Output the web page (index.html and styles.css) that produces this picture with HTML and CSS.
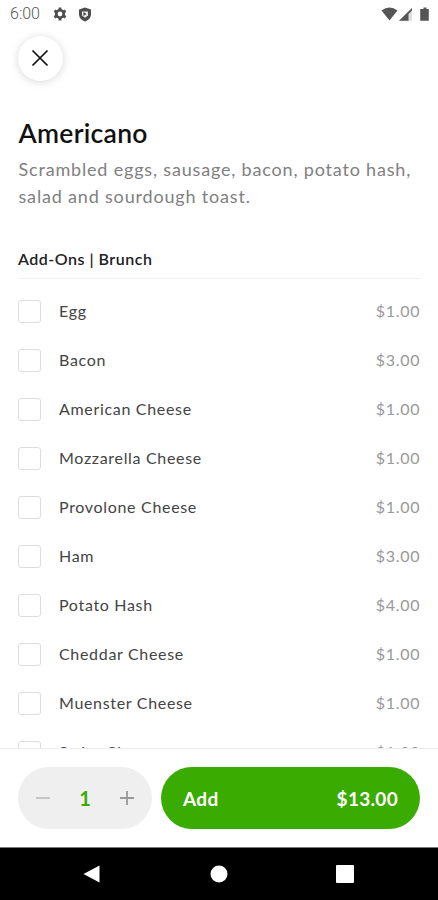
FILE: index.html
```html
<!DOCTYPE html>
<html lang="en">
<head>
<meta charset="utf-8">
<title>Americano</title>
<link rel="stylesheet" href="styles.css">
</head>
<body>
<div class="screen">
  <header class="status">
    <span class="time">6:00</span>
    <svg class="gear" width="14" height="14" viewBox="0 0 14 14"><circle cx="7" cy="7" r="3.700" fill="none" stroke="#4d4d4d" stroke-width="2.600"/><path d="M7 .5v2.6M7 10.9v2.6M1.4 3.7l2.2 1.3M10.4 9l2.2 1.3M1.4 10.3L3.600 9M10.400 5l2.200-1.300" stroke="#4d4d4d" stroke-width="2.800"/></svg>
    <svg class="shield" width="14" height="15" viewBox="0 0 14 15"><path d="M7 .4L13 2.600v4.400c0 3.600-2.500 6.300-6 7.600C3.500 13.300 1 10.600 1 7V2.600z" fill="#4d4d4d"/><path d="M4 4.500h6v4L7 10.700 4 8.500z" fill="#eee"/><path d="M5.400 5v4l3.300-2z" fill="#4d4d4d"/></svg>
    <svg class="signals" width="50" height="15" viewBox="0 0 50 15"><path d="M.5 3.400Q8.500-2.400 16.500 3.400L8.500 13.500z" fill="#555"/><path d="M31 1v12.700H18z" fill="#ddd"/><path d="M31 1v2.500L27.500 7v6.700H18z" fill="#555"/><path d="M42.500.5h3V2h2.300v11.700h-8.600V2h3.300z" fill="#555"/></svg>
  </header>
  <main class="content">
    <button class="close" aria-label="Close"><svg width="18" height="18" viewBox="0 0 18 18"><path d="M1.500 1.500l15 15M16.500 1.500l-15 15" stroke="#111" stroke-width="1.700"/></svg></button>
    <h1>Americano</h1>
    <p class="description">Scrambled eggs, sausage, bacon, potato hash,<br>salad and sourdough toast.</p>
    <h2>Add-Ons | Brunch</h2>
    <ul class="options">
      <li><i class="box"></i><span>Egg</span><b>$1.00</b></li>
      <li><i class="box"></i><span>Bacon</span><b>$3.00</b></li>
      <li><i class="box"></i><span>American Cheese</span><b>$1.00</b></li>
      <li><i class="box"></i><span>Mozzarella Cheese</span><b>$1.00</b></li>
      <li><i class="box"></i><span>Provolone Cheese</span><b>$1.00</b></li>
      <li><i class="box"></i><span>Ham</span><b>$3.00</b></li>
      <li><i class="box"></i><span>Potato Hash</span><b>$4.00</b></li>
      <li><i class="box"></i><span>Cheddar Cheese</span><b>$1.00</b></li>
      <li><i class="box"></i><span>Muenster Cheese</span><b>$1.00</b></li>
      <li><i class="box"></i><span>Swiss Cheese</span><b>$1.00</b></li>
    </ul>
  </main>
  <footer class="order">
    <div class="stepper">
      <svg width="14" height="14" viewBox="0 0 14 14"><path d="M0 7h14" stroke="#bdbdbd" stroke-width="1.600"/></svg>
      <span>1</span>
      <svg width="14" height="14" viewBox="0 0 14 14"><path d="M0 7h14M7 0v14" stroke="#999" stroke-width="1.800"/></svg>
    </div>
    <button class="add"><span>Add</span><span>$13.00</span></button>
  </footer>
  <nav class="navbar">
    <svg width="18" height="18" viewBox="0 0 18 18"><path d="M.5 9L16.500.500v17z" fill="#fff"/></svg>
    <svg width="18" height="18" viewBox="0 0 18 18"><circle cx="9" cy="9" r="8.500" fill="#fff"/></svg>
    <svg width="18" height="18" viewBox="0 0 18 18"><rect width="18" height="18" rx="1" fill="#fff"/></svg>
  </nav>
</div>
</body>
</html>
```
FILE: styles.css
```css
* { box-sizing: border-box; }
body { margin: 0; background: #fff; font-family: Lato, sans-serif; }
button { border: 0; padding: 0; font: inherit; }
.screen { width: 438px; height: 900px; display: flex; flex-direction: column; overflow: hidden; }
.status { height: 28px; flex: none; display: flex; align-items: center; padding: 0 7px 0 10px; }
.time { width: 43px; font: 300 16px/28px Roboto, sans-serif; color: #555; }
.shield { margin-left: 11px; }
.signals { margin-left: auto; }
.content { flex: 1; min-height: 0; overflow: hidden; padding: 8px 18px 0; }
.close { display: flex; align-items: center; justify-content: center; width: 45px; height: 45px; border-radius: 50%; background: #fff; box-shadow: 0 1px 9px rgba(0,0,0,.16); }
.close svg { margin-right: 1px; margin-bottom: 1px; }
h1 { margin: 36px 0 0 .5px; font-size: 26.5px; line-height: 32px; font-weight: 600; letter-spacing: .3px; color: #111; }
.description { margin: 7px 0 0 .5px; font-size: 18px; line-height: 27px; letter-spacing: .82px; color: #808080; white-space: nowrap; }
h2 { margin: 37px 0 0; height: 32px; border-bottom: 1px solid #f0f0f0; font-size: 16px; line-height: 24px; font-weight: 600; letter-spacing: .5px; color: #222; }
.options { list-style: none; margin: 7px 0 0; padding: 0; }
.options li { display: flex; align-items: center; height: 49px; font-size: 16px; letter-spacing: .68px; color: #444; }
.options span, .options b { margin-top: -1px; }
.box { width: 23px; height: 23px; margin: 1px 18px 0 0; border: 1px solid #ddd; border-radius: 3px; }
.options b { margin-left: auto; margin-right: -.3px; font-weight: 400; letter-spacing: .75px; color: #999; }
.order { flex: none; height: 99px; border-top: 1px solid #eee; display: flex; gap: 9px; padding: 18px 18px 18px; }
.stepper { width: 134px; border-radius: 31px; background: #efefef; display: flex; align-items: center; justify-content: space-between; padding: 0 18px; }
.stepper span { color: #3aab00; font-size: 20px; font-weight: 700; }
.add { flex: 1; display: flex; align-items: center; justify-content: space-between; padding: 0 22px; border-radius: 31px; background: #3aab00; color: #fff; font-size: 19px; letter-spacing: .3px; font-weight: 700; }
.navbar { flex: none; height: 53px; background: #000; border-top: 1px solid #777; display: flex; align-items: center; justify-content: space-between; padding: 0 84px 0 83px; }
```
